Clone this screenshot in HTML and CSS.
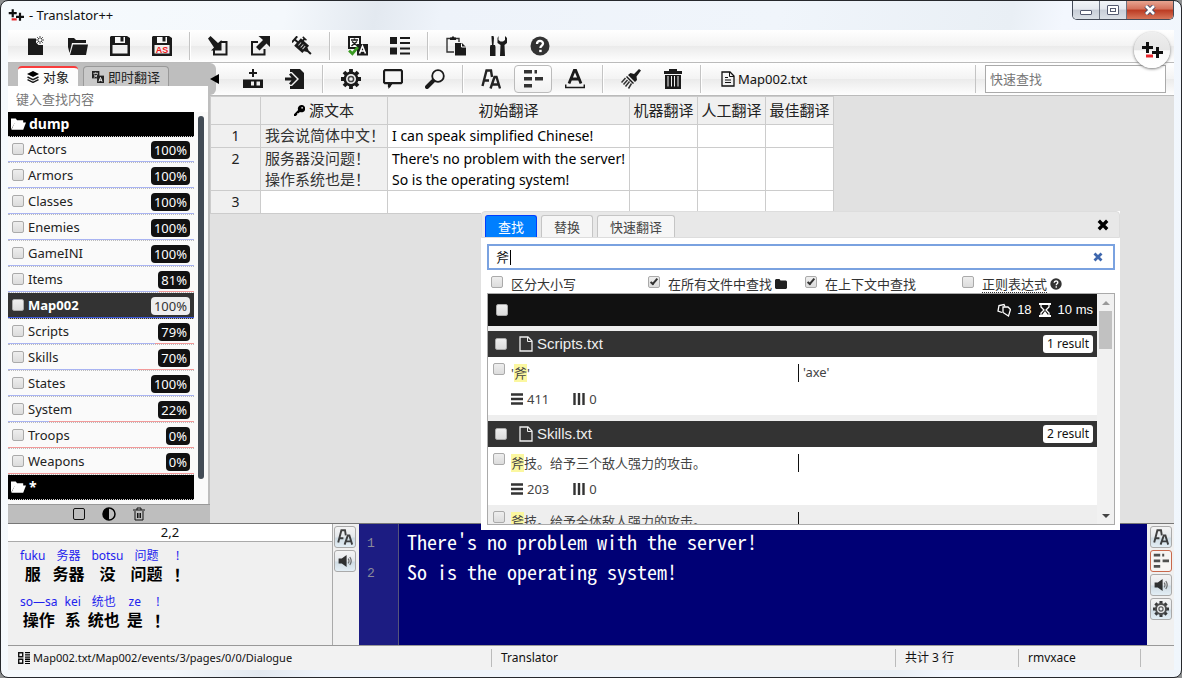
FILE: index.html
```html
<!DOCTYPE html>
<html lang="zh-CN">
<head>
<meta charset="utf-8">
<title>Translator++</title>
<link rel="stylesheet" href="styles.css">
</head>
<body>
<svg class="sprite" aria-hidden="true">
  <symbol id="i-logo" viewBox="0 0 22 18"><path d="M5 1h3v4h4v3H8v4H5V8H1V5h4zM15 6h3v4h4v3h-4v4h-3v-4h-4v-3h4z" fill="#111"/><path d="M5 13.500h7v3H5z" fill="#e8262c"/></symbol>
  <symbol id="i-new" viewBox="0 0 20 20"><path d="M2 2.500h8v4l2.500 2.500H17v10H2z"/><path d="M14 0v8M10 4h8M11.200 1.200l5.600 5.600M16.800 1.200l-5.600 5.600" stroke="#444" stroke-width="1"/><circle cx="14" cy="4" r="1.200" fill="#fff"/></symbol>
  <symbol id="i-open" viewBox="0 0 20 20"><path d="M0 2h6l2 2h10v3H4L1.500 17 0 11zM5 8.500h15L18 19H2z"/></symbol>
  <symbol id="i-save" viewBox="0 0 20 20"><path fill-rule="evenodd" d="M1 0h16l3 2v18H0V1zM5 1v6h10V1zM2.500 9v8.500h15V9z"/><path d="M10.500 1h3v4.500h-3z"/></symbol>
  <symbol id="i-import" viewBox="0 0 20 20"><path d="M13 6h5.500v12.500H6V14" fill="none" stroke="#1a1a1a" stroke-width="2"/><path d="M0 2.500L2.500 0l7.500 7 3.500-3v10.500H3l3-3z"/></symbol>
  <symbol id="i-export" viewBox="0 0 20 20"><path d="M8 6H2v12.500h12.500V13" fill="none" stroke="#1a1a1a" stroke-width="2"/><path d="M8.500 0H20v11l-3.500-3.500-7 7L6 11l7-7z"/></symbol>
  <symbol id="i-plug" viewBox="0 0 20 20"><g transform="rotate(42 10 10)"><path d="M-1 6h2v8h-2zM1 9h3v2H1zM4 5h11v10H4zM15 7.500l3 1.500h4v2h-4l-3 1.500zM6 2h2v3H6zM4.500 2h5v1.500h-5z"/><path d="M7 8v4M10 8v4M12.500 8v4" stroke="#ccc"/></g></symbol>
  <symbol id="i-trans" viewBox="0 0 20 20"><path d="M1 1h11v11H1z" fill="#fff" stroke="#1a1a1a" stroke-width="2"/><path d="M3 4h7M6.500 2.500v2M4 5.500l5.500 4.500M9 5.500L3.500 10" stroke="#1a1a1a" stroke-width="1.500"/><path d="M9 8h11v11.500H9z"/><path d="M11.500 17.500l3-7.500 3 7.500M12.500 15h4" stroke="#fff" stroke-width="1.500" fill="none"/></symbol>
  <symbol id="i-list" viewBox="0 0 20 20"><path d="M0 1h7v7H0zM0 11.500h7v7H0zM10 1h10v2H10zM10 6h10v2H10zM10 11.500h10v2H10zM10 16.500h10v2H10z"/></symbol>
  <symbol id="i-paste" viewBox="0 0 20 20"><path d="M8 16H1V2.500h12V6" fill="none" stroke="#333" stroke-width="1.400"/><path d="M4 1.500h1.500L7 0l1.500 1.500H10V4H4zM9 7h7l4 4v8.500H9z"/><path d="M15.500 7.500V11H20" stroke="#fff" fill="none"/></symbol>
  <symbol id="i-tools" viewBox="0 0 20 20"><path d="M3.500 0h2l.500 2-.500 7H7l.500 2v9h-5.500v-9L2.500 9h1.500L3.500 2zM10.500 0v4l2 1.500h2.500L17 4V0l2 2v5l-2.500 2L17 20h-5l.500-11L9.500 7V2z"/></symbol>
  <symbol id="i-help" viewBox="0 0 20 20"><circle cx="10" cy="10" r="9.500" fill="#333"/><path d="M7 8c0-4 6-4 6-.500 0 2.200-2.600 2-2.600 4.600" fill="none" stroke="#fff" stroke-width="2.300"/><path d="M9.200 13.800h2.500v2.300H9.200z" fill="#fff"/></symbol>
  <symbol id="i-layers" viewBox="0 0 12 12"><path d="M6 0l6 3-6 3-6-3z"/><path d="M.500 6L6 8.700 11.500 6M.500 8.700L6 11.400l5.500-2.700" fill="none" stroke="#1a1a1a" stroke-width="1.400"/></symbol>
  <symbol id="i-langs" viewBox="0 0 13 13"><path d="M0 0h8v8H0z" fill="#222"/><path d="M1.500 2.500h5M4 1.500v1M2 4l4 3M6 4L2 7" stroke="#ddd" fill="none"/><path d="M5.500 5H13v8H5.500z" fill="#222"/><path d="M7.500 11.500l1.700-4.500 1.700 4.500M8 10h2.400" stroke="#fff" fill="none"/></symbol>
  <symbol id="i-addrow" viewBox="0 0 20 20"><path d="M9 0h2v3h3v2h-3v3H9V5H6V3h3z"/><path fill-rule="evenodd" d="M0 10.500h20V19H0zM8 12.500v4h3v-4zM13.500 12.500v4h3.500v-4z"/></symbol>
  <symbol id="i-enter" viewBox="0 0 20 20"><path d="M5 0h10l4 4v16H5v-3h2l7-7-7-7H5z"/><path d="M0 8.500h6.500L4 5.500 6 4l6 6-6 6-2-1.500 2.500-3H0z"/></symbol>
  <symbol id="i-gear" viewBox="0 0 20 20"><g stroke="#1a1a1a" stroke-width="3.800"><path d="M10 0v20M0 10h20M3 3l14 14M17 3L3 17"/></g><circle cx="10" cy="10" r="7.500"/><circle cx="10" cy="10" r="5" fill="#eee"/><circle cx="10" cy="10" r="2.600" fill="none" stroke="#444" stroke-width="1.500"/></symbol>
  <symbol id="i-chat" viewBox="0 0 20 20"><path d="M2 1.200h16l1 1v11l-1 1H8L6 18v-3.800H2l-1-1v-11z" fill="#f6f6f6" stroke="#1a1a1a" stroke-width="2.200"/><path d="M5 14h5l-4.500 6z"/></symbol>
  <symbol id="i-find" viewBox="0 0 20 20"><circle cx="13" cy="7" r="5.800" fill="#f6f6f6" stroke="#1a1a1a" stroke-width="1.800"/><path d="M2 18l6-6" stroke="#1a1a1a" stroke-width="4" stroke-linecap="round"/></symbol>
  <symbol id="i-fonts" viewBox="0 0 20 20"><path d="M1.500 17L5.500 1.500H10L11 8M3.500 11.500H8" fill="none" stroke="#222" stroke-width="2.400"/><path d="M9.500 19.500L13.500 8h2L19 19.500M11 15.500h6" fill="none" stroke="#222" stroke-width="2.400"/></symbol>
  <symbol id="i-lines" viewBox="0 0 20 20"><path d="M1 1h8v3.500H1zM11.500 1H14v3.500h-2.500zM1 8h8v3.500H1zM12 8h8v3.500h-8zM1 15h8v3.500H1z" fill="#333"/></symbol>
  <symbol id="i-color" viewBox="0 0 20 20"><path d="M4 14.500L9.300 1.500h1.400L16 14.500M6 10h8" fill="none" stroke="#1a1a1a" stroke-width="2.800"/><path d="M.700 15.500v3h18.600v-3" fill="none" stroke="#1a1a1a" stroke-width="1.500"/></symbol>
  <symbol id="i-brush" viewBox="0 0 20 20"><path d="M18 0l2 1.500-4.500 6 .500 3.500-2 2-7-7 2.500-2 3.500 1zM6 7l7 7-1 1-7-7z"/><path d="M4.500 9L.500 13.500M6.500 11l-4 4.500M8.500 12.500L4.500 17.500M10.500 14.500L7.500 19.500" stroke="#333" stroke-width="1.500"/></symbol>
  <symbol id="i-trash" viewBox="0 0 20 20"><path d="M1 2h5V0h8v2h5v3H1z"/><path fill-rule="evenodd" d="M2 6h16v14H2zM4.500 7v10.500h1V7zM8 7v10.500h1V7zM11 7v10.500h1V7zM14.500 7v10.500h1V7z"/></symbol>
  <symbol id="i-doc" viewBox="0 0 14 16"><path d="M1 1h8l4 4v10H1z" fill="none" stroke="currentColor" stroke-width="1.300"/><path d="M8.500 1v4.500H13" fill="none" stroke="currentColor"/><path d="M4 6.500h3M4 9h6M4 11.500h6" stroke="currentColor"/></symbol>
  <symbol id="i-file" viewBox="0 0 14 16"><path d="M1 1h8l4 4v10H1z" fill="none" stroke="currentColor" stroke-width="1.300"/><path d="M8.500 1v4.500H13" fill="none" stroke="currentColor"/></symbol>
  <symbol id="i-key" viewBox="0 0 12 12"><path fill-rule="evenodd" d="M8 0a4 4 0 1 1-1.500 7.600L5 9H3.500v1.500L2 12H0v-2l4.500-4.500A4 4 0 0 1 8 0zM8.800 2.300a.8.8 0 1 0 .1 0z"/></symbol>
  <symbol id="i-folder" viewBox="0 0 16 12"><path d="M0 0h5l1.500 2H13v3H4L0 12z" fill="#fff"/><path d="M4 4.500h12L13 12H.500z" fill="#fff"/></symbol>
  <symbol id="i-dir" viewBox="0 0 12 10"><path d="M0 1l1-1h3.500l1 1.500H11l1 1V9l-1 1H1L0 9z" fill="#222"/></symbol>
  <symbol id="i-bin" viewBox="0 0 12 14"><path d="M0 3h12M4 3V1h4v2M2 4v9h8V4M4.500 6v5M6 6v5M7.500 6v5" fill="none" stroke="#111"/></symbol>
  <symbol id="i-half" viewBox="0 0 14 14"><circle cx="7" cy="7" r="6" fill="none" stroke="#000" stroke-width="1.500"/><path d="M7 1a6 6 0 0 0 0 12z"/></symbol>
  <symbol id="i-sound" viewBox="0 0 20 20"><path d="M2 7h4l6-4.500v15L6 13H2z" fill="#111"/><path d="M14 7q2 3 0 6M16 5q3.500 5 0 10" stroke="#555" fill="none" stroke-width="1.500"/></symbol>
  <symbol id="i-grid" viewBox="0 0 12 12"><path d="M.700.700h4v4h-4zM.700 7.200h4v4h-4z" fill="none" stroke="#111" stroke-width="1.400"/><path d="M7 0h5v1.300H7zM7 2.200h5v1.300H7zM7 4.400h5v1.300H7zM7 6.600h5v1.300H7zM7 8.800h5v1.300H7zM7 11h5v1H7z"/></symbol>
  <symbol id="i-close" viewBox="0 0 10 10"><path d="M1.500 1.500l7 7M8.500 1.500l-7 7" stroke="currentColor" stroke-width="2.800"/></symbol>
  <symbol id="i-pages" viewBox="0 0 14 14"><path d="M5 9.500L1 8 2 2.500l5-1 1 2" fill="none" stroke="#fff" stroke-width="1.300"/><path d="M6 4h5l2.500 2.500-2 6.500L6 9.500z" fill="none" stroke="#fff" stroke-width="1.300"/></symbol>
  <symbol id="i-time" viewBox="0 0 12 14"><path d="M0 1h12M0 13h12" stroke="#fff" stroke-width="2"/><path d="M2 2v2l3 3-3 3v2M10 2v2L7 7l3 3v2" fill="none" stroke="#fff" stroke-width="1.300"/><path d="M3 12l3-4 3 4z" fill="#fff"/></symbol>
  <symbol id="i-rows" viewBox="0 0 12 12"><path d="M0 1.500h12M0 6h12M0 10.500h12" stroke="#333" stroke-width="2.400"/></symbol>
  <symbol id="i-cols" viewBox="0 0 12 12"><path d="M1.500 0v12M6 0v12M10.500 0v12" stroke="#333" stroke-width="2.400"/></symbol>
</svg>

<div class="window">
  <header class="titlebar">
    <svg class="title-logo"><use href="#i-logo"/></svg>
    <span class="title-text">- Translator++</span>
    <div class="win-controls">
      <button class="win-btn" aria-label="最小化"><span class="min-mark"></span></button>
      <button class="win-btn" aria-label="最大化"><span class="max-mark"></span></button>
      <button class="win-btn win-close" aria-label="关闭"><svg class="close-mark" viewBox="0 0 12 10"><path d="M2 1l8 8M10 1L2 9" stroke="#444a66" stroke-width="4.500"/><path d="M2 1l8 8M10 1L2 9" stroke="#fff" stroke-width="2.600"/></svg></button>
    </div>
  </header>

  <main class="app">
    <nav class="toolbar toolbar-main">
      <div class="group">
        <button class="tool" aria-label="新建"><svg class="icon"><use href="#i-new"/></svg></button>
        <button class="tool" aria-label="打开"><svg class="icon"><use href="#i-open"/></svg></button>
        <button class="tool" aria-label="保存"><svg class="icon"><use href="#i-save"/></svg></button>
        <button class="tool" aria-label="另存为"><svg class="icon"><use href="#i-save"/><text x="10" y="17" text-anchor="middle" class="as-text">AS</text></svg></button>
      </div>
      <div class="group">
        <button class="tool" aria-label="导入"><svg class="icon"><use href="#i-import"/></svg></button>
        <button class="tool" aria-label="导出"><svg class="icon"><use href="#i-export"/></svg></button>
        <button class="tool" aria-label="注入"><svg class="icon"><use href="#i-plug"/></svg></button>
      </div>
      <div class="group">
        <button class="tool" aria-label="翻译"><svg class="icon"><use href="#i-trans"/></svg><svg class="tick" viewBox="0 0 10 9"><path d="M1 4l3 3 5-6" fill="none" stroke="#3a9b22" stroke-width="2.500"/></svg></button>
        <button class="tool" aria-label="属性"><svg class="icon"><use href="#i-list"/></svg></button>
      </div>
      <div class="group">
        <button class="tool" aria-label="粘贴"><svg class="icon"><use href="#i-paste"/></svg></button>
        <button class="tool" aria-label="工具"><svg class="icon"><use href="#i-tools"/></svg></button>
        <button class="tool" aria-label="帮助"><svg class="icon"><use href="#i-help"/></svg></button>
      </div>
      <a class="brand" href="#" aria-label="Translator++"><svg class="brand-logo"><use href="#i-logo"/></svg></a>
    </nav>

    <div class="workspace">
      <aside class="sidebar">
        <div class="side-tabs">
          <button class="side-tab is-active"><svg class="icon-12"><use href="#i-layers"/></svg>对象</button>
          <button class="side-tab"><svg class="icon-12"><use href="#i-langs"/></svg>即时翻译</button>
        </div>
        <input class="side-search" type="text" placeholder="键入查找内容" aria-label="键入查找内容">
        <div class="side-body">
          <div class="file-list">
            <div class="folder"><svg class="folder-icon"><use href="#i-folder"/></svg>dump</div>
            <label class="file" style="--done:100%"><input type="checkbox" class="check"><span class="file-name">Actors</span><span class="badge">100%</span></label>
            <label class="file" style="--done:100%"><input type="checkbox" class="check"><span class="file-name">Armors</span><span class="badge">100%</span></label>
            <label class="file" style="--done:100%"><input type="checkbox" class="check"><span class="file-name">Classes</span><span class="badge">100%</span></label>
            <label class="file" style="--done:100%"><input type="checkbox" class="check"><span class="file-name">Enemies</span><span class="badge">100%</span></label>
            <label class="file" style="--done:100%"><input type="checkbox" class="check"><span class="file-name">GameINI</span><span class="badge">100%</span></label>
            <label class="file" style="--done:81%"><input type="checkbox" class="check"><span class="file-name">Items</span><span class="badge">81%</span></label>
            <label class="file is-open" style="--done:100%"><input type="checkbox" class="check"><span class="file-name">Map002</span><span class="badge">100%</span></label>
            <label class="file" style="--done:79%"><input type="checkbox" class="check"><span class="file-name">Scripts</span><span class="badge">79%</span></label>
            <label class="file" style="--done:70%"><input type="checkbox" class="check"><span class="file-name">Skills</span><span class="badge">70%</span></label>
            <label class="file" style="--done:100%"><input type="checkbox" class="check"><span class="file-name">States</span><span class="badge">100%</span></label>
            <label class="file" style="--done:22%"><input type="checkbox" class="check"><span class="file-name">System</span><span class="badge">22%</span></label>
            <label class="file" style="--done:0%"><input type="checkbox" class="check"><span class="file-name">Troops</span><span class="badge">0%</span></label>
            <label class="file" style="--done:0%"><input type="checkbox" class="check"><span class="file-name">Weapons</span><span class="badge">0%</span></label>
            <div class="folder"><svg class="folder-icon"><use href="#i-folder"/></svg>*</div>
          </div>
          <div class="side-scroll"></div>
        </div>
        <div class="side-footer">
          <button class="foot-btn" aria-label="全不选"><span class="square"></span></button>
          <button class="foot-btn" aria-label="反选"><svg class="icon-14"><use href="#i-half"/></svg></button>
          <button class="foot-btn" aria-label="删除"><svg class="icon-14"><use href="#i-bin"/></svg></button>
        </div>
      </aside>

      <section class="content">
        <nav class="toolbar toolbar-file">
          <button class="collapse" aria-label="收起"><svg class="collapse-mark" viewBox="0 0 9 10"><path d="M9 0v10L0 5z" fill="#000"/></svg></button>
          <div class="group">
            <button class="tool" aria-label="添加行"><svg class="icon"><use href="#i-addrow"/></svg></button>
            <button class="tool" aria-label="插入"><svg class="icon"><use href="#i-enter"/></svg></button>
          </div>
          <div class="group">
            <button class="tool" aria-label="设置"><svg class="icon"><use href="#i-gear"/></svg></button>
            <button class="tool" aria-label="备注"><svg class="icon"><use href="#i-chat"/></svg></button>
            <button class="tool" aria-label="查找"><svg class="icon"><use href="#i-find"/></svg></button>
          </div>
          <div class="group">
            <button class="tool" aria-label="字体"><svg class="icon"><use href="#i-fonts"/></svg></button>
            <button class="tool is-pressed" aria-label="行"><svg class="icon"><use href="#i-lines"/></svg></button>
            <button class="tool" aria-label="颜色"><svg class="icon"><use href="#i-color"/></svg></button>
          </div>
          <div class="group">
            <button class="tool" aria-label="清除"><svg class="icon"><use href="#i-brush"/></svg></button>
            <button class="tool" aria-label="删除"><svg class="icon"><use href="#i-trash"/></svg></button>
          </div>
          <div class="current-file"><svg class="doc-icon"><use href="#i-doc"/></svg>Map002.txt</div>
          <input class="quick-find" type="text" placeholder="快速查找" aria-label="快速查找">
        </nav>
        <table class="grid">
          <colgroup><col class="c-num"><col class="c-key"><col class="c-first"><col class="c-alt"><col class="c-alt"><col class="c-alt"></colgroup>
          <thead><tr><th></th><th><svg class="icon-key"><use href="#i-key"/></svg>源文本</th><th>初始翻译</th><th>机器翻译</th><th>人工翻译</th><th>最佳翻译</th></tr></thead>
          <tbody>
            <tr><th>1</th><td class="src">我会说简体中文！</td><td>I can speak simplified Chinese!</td><td></td><td></td><td></td></tr>
            <tr><th>2</th><td class="src">服务器没问题！<br>操作系统也是！</td><td>There's no problem with the server!<br>So is the operating system!</td><td></td><td></td><td></td></tr>
            <tr><th>3</th><td></td><td></td><td></td><td></td><td></td></tr>
          </tbody>
        </table>
      </section>
    </div>

    <section class="editor">
      <div class="reading">
        <div class="cell-pos">2,2</div>
        <div class="ruby-box">
          <div class="ruby-line">
            <span class="word"><i>fuku</i><b>服</b></span><span class="word"><i>务器</i><b>务器</b></span><span class="word"><i>botsu</i><b>没</b></span><span class="word"><i>问题</i><b>问题</b></span><span class="word"><i>!</i><b>！</b></span>
          </div>
          <div class="ruby-line">
            <span class="word"><i>so—sa</i><b>操作</b></span><span class="word"><i>kei</i><b>系</b></span><span class="word"><i>统也</i><b>统也</b></span><span class="word"><i>ze</i><b>是</b></span><span class="word"><i>!</i><b>！</b></span>
          </div>
        </div>
      </div>
      <div class="strip">
        <button class="strip-btn" aria-label="字体"><svg class="icon-16"><use href="#i-fonts"/></svg></button>
        <button class="strip-btn" aria-label="朗读"><svg class="icon-16"><use href="#i-sound"/></svg></button>
      </div>
      <div class="code">
        <ol class="gutter"><li>1</li><li>2</li></ol>
        <div class="code-text">There's no problem with the server!<br>So is the operating system!</div>
      </div>
      <div class="strip strip-end">
        <button class="strip-btn" aria-label="字体"><svg class="icon-16"><use href="#i-fonts"/></svg></button>
        <button class="strip-btn is-on" aria-label="行"><svg class="icon-16"><use href="#i-lines"/></svg></button>
        <button class="strip-btn" aria-label="朗读"><svg class="icon-16"><use href="#i-sound"/></svg></button>
        <button class="strip-btn" aria-label="设置"><svg class="icon-16"><use href="#i-gear"/></svg></button>
      </div>
    </section>

    <footer class="status">
      <div class="status-path"><svg class="icon-12"><use href="#i-grid"/></svg>Map002.txt/Map002/events/3/pages/0/0/Dialogue</div>
      <div class="status-engine">Translator</div>
      <div class="status-rows">共计 3 行</div>
      <div class="status-kind">rmvxace</div>
      <div class="status-end"></div>
    </footer>
  </main>

  <div class="dialog" role="dialog" aria-label="查找">
    <div class="dialog-head">
      <button class="dlg-tab is-active">查找</button>
      <button class="dlg-tab">替换</button>
      <button class="dlg-tab">快速翻译</button>
      <button class="dlg-close" aria-label="关闭"><svg class="icon-12"><use href="#i-close"/></svg></button>
    </div>
    <div class="dialog-body">
      <div class="query">
        <input class="query-input" type="text" value="斧" aria-label="查找内容">
        <span class="caret"></span>
        <button class="query-clear" aria-label="清空"><svg class="icon-10"><use href="#i-close"/></svg></button>
      </div>
      <div class="options">
        <label class="option"><input type="checkbox" class="check">区分大小写</label>
        <label class="option"><input type="checkbox" class="check" checked><span>在所有文件中查找</span><svg class="icon-12"><use href="#i-dir"/></svg></label>
        <label class="option"><input type="checkbox" class="check" checked>在上下文中查找</label>
        <label class="option"><input type="checkbox" class="check"><span class="dotted">正则表达式</span><svg class="icon-12"><use href="#i-help"/></svg></label>
      </div>
      <div class="results">
        <div class="result-list">
          <div class="summary"><input type="checkbox" class="check" aria-label="全选"><span class="summary-info"><svg class="icon-14"><use href="#i-pages"/></svg><span>18</span><svg class="icon-14"><use href="#i-time"/></svg><span>10 ms</span></span></div>
          <div class="hit-group">
            <div class="hit-head"><input type="checkbox" class="check" aria-label="Scripts.txt"><svg class="file-icon"><use href="#i-file"/></svg><span>Scripts.txt</span><span class="count">1 result</span></div>
            <div class="hit"><input type="checkbox" class="check" aria-label="结果"><div class="hit-src">'<mark>斧</mark>'</div><div class="hit-dst">'axe'</div><div class="hit-pos"><svg class="icon-12"><use href="#i-rows"/></svg><span>411</span><svg class="icon-12"><use href="#i-cols"/></svg><span>0</span></div></div>
          </div>
          <div class="hit-group">
            <div class="hit-head"><input type="checkbox" class="check" aria-label="Skills.txt"><svg class="file-icon"><use href="#i-file"/></svg><span>Skills.txt</span><span class="count">2 result</span></div>
            <div class="hit"><input type="checkbox" class="check" aria-label="结果"><div class="hit-src"><mark>斧</mark>技。给予三个敌人强力的攻击。</div><div class="hit-dst"></div><div class="hit-pos"><svg class="icon-12"><use href="#i-rows"/></svg><span>203</span><svg class="icon-12"><use href="#i-cols"/></svg><span>0</span></div></div>
            <div class="hit is-even"><input type="checkbox" class="check" aria-label="结果"><div class="hit-src"><mark>斧</mark>技。给予全体敌人强力的攻击。</div><div class="hit-dst"></div></div>
          </div>
        </div>
        <div class="scrollbar"><span class="arrow-up"></span><span class="thumb"></span><span class="arrow-down"></span></div>
      </div>
    </div>
  </div>
</div>
</body>
</html>
```

FILE: styles.css
```css
* { box-sizing: border-box; }

body {
  margin: 0;
  background: #8d8f90;
  color: #222;
  font: 13px/18px "Noto Sans", "Noto Sans CJK SC", sans-serif;
}

button, input {
  margin: 0;
  padding: 0;
  border: 0;
  background: none;
  color: inherit;
  font: inherit;
}

svg { display: block; flex: none; }
.sprite { position: absolute; width: 0; height: 0; }

.icon { width: 20px; height: 20px; fill: #1a1a1a; }
.icon-16 { width: 16px; height: 16px; fill: #333; opacity: .85; }
.icon-14 { width: 14px; height: 14px; }
.icon-12 { width: 12px; height: 12px; }
.icon-10 { width: 10px; height: 10px; }
.as-text { font: bold 9px "Liberation Sans", sans-serif; fill: #f01818; }

.check {
  appearance: none;
  position: relative;
  flex: none;
  width: 12px;
  height: 12px;
  border: 1px solid #aaa;
  border-radius: 2px;
  background: linear-gradient(#eee, #dcdcdc);
}
.check:checked::after {
  content: "";
  position: absolute;
  left: 3px;
  top: 0;
  width: 2px;
  height: 6px;
  border: solid #333;
  border-width: 0 2px 2px 0;
  transform: rotate(40deg);
}

/* Window frame */
.window {
  position: relative;
  display: flex;
  flex-direction: column;
  min-height: 100vh;
  padding: 0 7px 7px;
  border: 1px solid #26282c;
  border-radius: 8px;
  background: linear-gradient(100deg, #f6fafd 0, #f4f8fc 22%, #e3e9f0 29%, #eef3fa 34%, #f0f5fb 60%, #e9eff5 78%, #f3f7fe 82%, #f0f6fc 100%);
}
.titlebar { display: flex; align-items: flex-start; height: 29px; }
.title-logo { width: 16px; height: 14px; margin-top: 7px; }
.title-text { margin: 5px 0 0 5px; color: #111; }
.win-controls {
  display: flex;
  margin-left: auto;
  border: 1px solid #444b58;
  border-top: 0;
  border-radius: 0 0 5px 5px;
  overflow: hidden;
}
.win-btn {
  display: grid;
  place-items: center;
  width: 27px;
  height: 18px;
  border-right: 1px solid #6b7280;
  background: linear-gradient(#f2f5f8 0, #e4e8ee 45%, #c8ced8 50%, #dbe0e6 100%);
}
.win-close {
  width: 46px;
  border-right: 0;
  background: linear-gradient(#e7a491 0, #d3705a 45%, #bb3a22 50%, #d8765a 100%);
}
.min-mark { width: 12px; height: 5px; margin-top: 4px; border: 1px solid #555b70; border-radius: 1px; background: #fff; }
.max-mark { width: 12px; height: 10px; border: 1px solid #555b70; border-radius: 1px; background: #fff; }
.max-mark::after { content: ""; display: block; width: 4px; height: 2px; margin: 2px; border: 1px solid #555b70; }
.close-mark { width: 12px; height: 10px; }

.app { flex: 1; display: flex; flex-direction: column; background: #f0f0f0; }

/* Toolbars */
.toolbar {
  position: relative;
  display: flex;
  align-items: center;
  height: 33px;
  border-bottom: 1px solid #bbb;
  background: linear-gradient(#fff 0, #f3f3f3 50%, #ebebeb 51%, #fefefe 100%);
}
.toolbar-main { padding-left: 9px; }
.group { display: flex; gap: 4px; }
.group::after { content: ""; width: 1px; height: 28px; margin: 0 8px 0 4px; border-right: 1px solid #fff; background: #c4c4c4; background-clip: padding-box; }
.toolbar-main .group:nth-of-type(4)::after { display: none; }
.tool {
  position: relative;
  display: grid;
  place-items: center;
  width: 38px;
  height: 28px;
}
.tool.is-pressed { border: 1px solid #bbb; border-radius: 4px; background: linear-gradient(#fff, #f1f1f1); }
.tick { position: absolute; left: 9px; bottom: 4px; width: 11px; height: 10px; }
.brand {
  position: absolute;
  z-index: 2;
  right: 4px;
  top: 2px;
  display: grid;
  place-items: center;
  width: 36px;
  height: 36px;
  border-radius: 50%;
  background: linear-gradient(#efefef 0, #e6e6e6 50%, #fbfbfb 52%, #fff 100%);
  box-shadow: 0 1px 3px #777;
}
.brand-logo { width: 22px; height: 18px; }

.workspace { flex: 1; display: flex; }

/* Sidebar */
.sidebar {
  display: flex;
  flex-direction: column;
  width: 202px;
  background: #bebebe;
}
.side-tabs { display: flex; align-items: flex-end; gap: 5px; height: 23px; padding-left: 10px; }
.side-tab {
  display: flex;
  align-items: center;
  gap: 4px;
  height: 20px;
  padding: 0 8px;
  border: 1px solid #999;
  border-bottom: 0;
  border-radius: 4px 4px 0 0;
  background: #c9c9c9;
}
.side-tab.is-active { padding: 0 9px; border: 0; border-top: 2px solid #f83c3c; background: #fdfdfd; }
.side-search { width: 200px; height: 26px; padding: 0 8px; background: #fff; }
::placeholder { color: #777; opacity: 1; }
.side-body { flex: 1; display: flex; gap: 4px; width: 200px; background: #fafafa; }
.file-list { flex: 1; }
.side-scroll { width: 6px; margin: 4px 4px 25px 0; border-radius: 3px; background: #434c56; }
.folder {
  display: flex;
  align-items: center;
  gap: 3px;
  height: 25px;
  padding-left: 3px;
  border-bottom: 1px dotted #ccc;
  background: #000;
  color: #fff;
  font-size: 14px;
  font-weight: bold;
}
.folder-icon { width: 15px; height: 12px; }
.file {
  display: flex;
  align-items: center;
  gap: 4px;
  height: 26px;
  padding: 0 4px 1px;
  border-bottom: 1px dotted #bbb;
  background:
    linear-gradient(#a9b4f2, #a9b4f2) left bottom / var(--done) 1px no-repeat padding-box,
    linear-gradient(#f29a9a, #f29a9a) left bottom / 100% 1px no-repeat padding-box;
}
.file-name { flex: 1; }
.file.is-open { background: linear-gradient(#3b57dd, #3b57dd) left bottom / 100% 1px no-repeat padding-box, #333; color: #fff; font-weight: bold; }
.badge { height: 18px; margin-top: 2px; padding: 0 3px; border-radius: 4px; background: #111; color: #fff; font-weight: normal; }
.is-open .badge { background: #eee; color: #333; }
.side-footer {
  display: flex;
  justify-content: center;
  align-items: center;
  gap: 16px;
  height: 19px;
  border-top: 1px solid #999;
}
.foot-btn { display: grid; place-items: center; width: 14px; height: 14px; }
.square { width: 12px; height: 12px; border: 1px solid #111; border-radius: 2px; }

/* Sheet */
.content { flex: 1; min-width: 0; background: #e1e1e1; }
.collapse {
  width: 6px;
  height: 32px;
  margin-right: 18px;
  border-radius: 0 6px 6px 0;
  background: #bebebe;
}
.collapse-mark { width: 9px; height: 10px; }
.doc-icon { width: 14px; height: 16px; }
.current-file { flex: 1; display: flex; align-items: center; gap: 3px; padding-left: 11px; color: #111; }
.current-file::after { content: ""; width: 1px; height: 28px; margin: 0 9px 0 auto; background: #c4c4c4; }
.quick-find { width: 181px; height: 28px; margin-right: 8px; padding: 0 4px; border: 1px solid #aaa; background: #fff; }

.grid {
  width: 624px;
  border: solid #ccc;
  border-width: 1px 0 0 1px;
  border-spacing: 0;
  table-layout: fixed;
  color: #000;
  font-size: 14px;
  line-height: 21px;
}
.grid th, .grid td {
  height: 23px;
  padding: 0 0 0 4px;
  border: solid #ccc;
  border-width: 0 1px 1px 0;
  background: #fff;
  text-align: left;
  vertical-align: top;
  white-space: nowrap;
}
.grid th { padding: 0; background: #f0f0f0; color: #222; font-weight: normal; text-align: center; }
.grid thead th { height: 28px; font-size: 15px; vertical-align: middle; }
.grid .src { background: #f0f0f0; color: #333; font-size: 15px; }
.c-num { width: 50px; }
.c-key { width: 127px; }
.c-first { width: 242px; }
.c-alt { width: 68px; }
.icon-key { display: inline-block; width: 11px; height: 11px; margin-right: 4px; }

/* Cell editor */
.editor { display: flex; height: 122px; border-top: 1px solid #777; }
.reading { width: 325px; border-right: 1px solid #aaa; }
.cell-pos { height: 18px; border-bottom: 1px solid #aaa; background: #fff; color: #111; line-height: 16px; text-align: center; }
.ruby-box { display: grid; gap: 10px; padding: 5px 12px; }
.ruby-line { display: flex; gap: 7px; }
.word { display: flex; flex-direction: column; align-items: center; }
.word i { color: #2222ee; font-size: 12px; font-style: normal; line-height: 18px; }
.word b { color: #000; font-size: 16px; line-height: 18px; }
.word:last-child b { font-family: "Noto Sans CJK TC", sans-serif; }
.strip { display: flex; flex-direction: column; gap: 2px; width: 26px; padding: 2px 1px; }
.strip-end { width: 27px; padding-left: 3px; }
.strip-btn {
  display: grid;
  place-items: center;
  width: 22px;
  height: 22px;
  border: 1px solid #aaa;
  border-radius: 3px;
  background: linear-gradient(#f4f4f4 0, #e4e8ec 50%, #cfdbe3 55%, #e3eef5 100%);
}
.strip-btn.is-on { border-color: #c8684c; background: #f6f4f3; }
.code { flex: 1; display: flex; background: #000075; line-height: 30px; }
.gutter {
  width: 40px;
  margin: 0;
  padding: 5px 0 0 8px;
  border-right: 1px solid #55557a;
  background: #1c1c82;
  color: #8a8a9a;
  font-family: "Liberation Mono", monospace;
  list-style: none;
}
.code-text { padding: 3px 8px; color: #fff; font-family: "Noto Sans CJK JP", monospace; font-size: 20px; font-feature-settings: "hwid"; white-space: nowrap; }

/* Status bar */
.status {
  display: flex;
  align-items: center;
  height: 25px;
  border-top: 1px solid #999;
  background: #f2f2f2;
  color: #111;
  font-size: 12px;
}
.status > div { height: 18px; padding-left: 9px; border-left: 1px solid #bbb; }
.status > .status-path { display: flex; align-items: center; gap: 3px; width: 483px; padding-left: 10px; border-left: 0; font-size: 11px; }
.status > .status-engine { flex: 1; }
.status-rows { width: 123px; }
.status-kind { width: 122px; }
.status-end { width: 34px; }

/* Find dialog */
.dialog {
  position: absolute;
  z-index: 3;
  top: 210px;
  right: 61px;
  width: 639px;
  background: #fff;
}
.dialog-head {
  display: flex;
  align-items: flex-end;
  gap: 4px;
  height: 27px;
  padding: 0 10px 0 3px;
  border: 1px solid #ddd;
  border-radius: 4px 4px 0 0;
  background: #e8e8e8;
}
.dlg-tab {
  height: 22px;
  padding: 0 12px;
  border: 1px solid #c5c5c5;
  border-bottom: 0;
  border-radius: 3px 3px 0 0;
  background: #f6f6f6;
  color: #454545;
  line-height: 20px;
}
.dlg-tab.is-active { border-color: #003eff; background: #007fff; color: #fff; }
.dlg-close { align-self: center; margin-left: auto; color: #000; }
.dialog-body { display: flex; flex-direction: column; padding: 6px 5px 5px 6px; }
.query {
  display: flex;
  align-items: center;
  height: 26px;
  padding: 0 10px 0 7px;
  border: 2px solid #7aa2e0;
}
.query-input { width: 14px; color: #111; outline: 0; }
.caret { width: 1px; height: 15px; background: #000; }
.query-clear { margin-left: auto; color: #3d66ad; }
.options { display: grid; grid-template-columns: repeat(4, 1fr); padding: 5px 0 0; height: 23px; }
.option { display: flex; align-items: center; gap: 3px; padding-left: 4px; color: #333; }
.option .check { margin: -4px 5px 0 0; }
.dotted { border-bottom: 1px dotted #333; line-height: 16px; }
.results { display: flex; height: 232px; border: 1px solid #aaa; overflow: hidden; }
.result-list { flex: 1; background: #eee; }
.summary {
  display: flex;
  align-items: center;
  height: 32px;
  margin-bottom: 5px;
  padding: 0 4px 0 8px;
  background: #111;
  color: #fff;
  font-family: "Liberation Sans", sans-serif;
}
.summary-info { display: flex; align-items: center; gap: 6px; margin-left: auto; }
.hit-group { margin-bottom: 6px; }
.hit-head {
  display: flex;
  align-items: center;
  height: 26px;
  padding: 0 4px 0 7px;
  background: #333;
  color: #eee;
  font: 15px/20px "Liberation Sans", sans-serif;
}
.file-icon { width: 14px; height: 16px; margin: 0 4px 0 12px; }
.count {
  margin-left: auto;
  padding: 0 4px;
  border-radius: 3px;
  background: #fff;
  color: #111;
  font: 12px/18px "Noto Sans", sans-serif;
}
.hit {
  display: grid;
  grid-template-columns: 18px 1fr 299px;
  grid-template-rows: 18px 18px;
  row-gap: 8px;
  height: 58px;
  padding: 7px 0 0 5px;
  background: #fff;
  color: #444;
}
.hit .check { margin-top: -1px; }
.hit.is-even { background: #eee; }
.hit mark { background: #fbf7a0; color: inherit; }
.hit-dst { padding-left: 4px; border-left: 1px solid #111; line-height: 16px; }
.hit-pos { grid-column: 2 / -1; display: flex; align-items: center; gap: 4px; }
.hit-pos span + .icon-12 { margin-left: 20px; }
.scrollbar { display: flex; flex-direction: column; align-items: center; width: 17px; padding: 7px 0 6px; background: #f1f1f1; }
.thumb { width: 13px; height: 38px; margin-top: 6px; background: #c1c1c1; }
.arrow-up, .arrow-down { border: 4px solid transparent; border-top: 0; border-bottom-color: #999; }
.arrow-down { margin-top: auto; border-top: 4px solid #444; border-bottom: 0; }
```
